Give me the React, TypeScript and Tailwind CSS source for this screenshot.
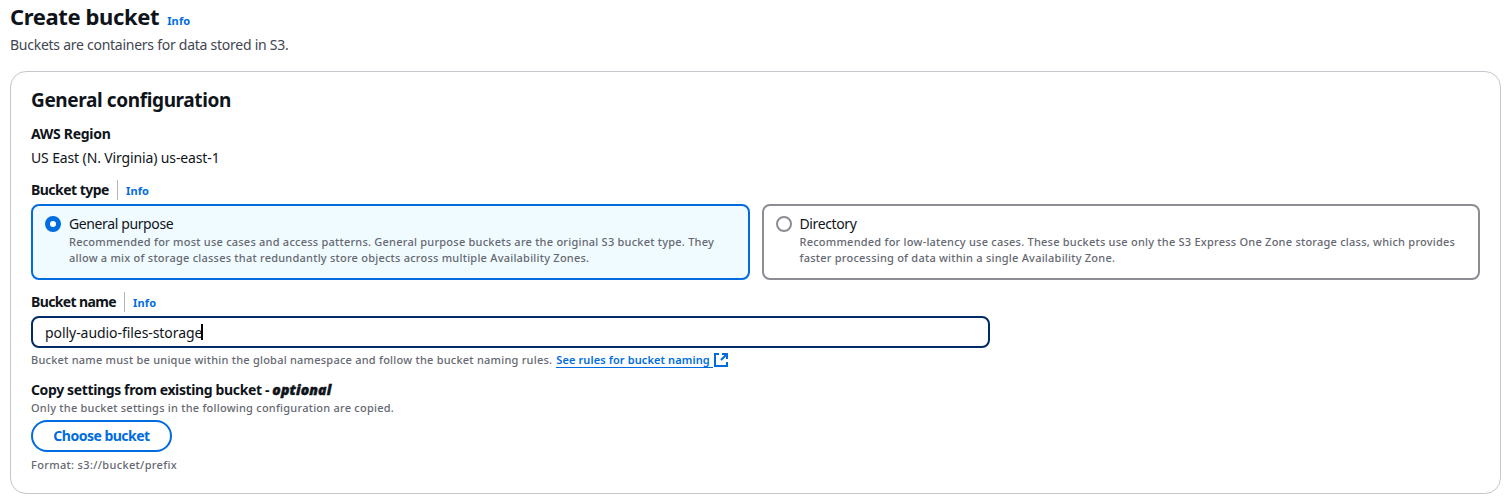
import type { ReactNode } from "react";

function Info({ className = "" }: { className?: string }) {
  return (
    <a href="#" className={`text-[11px] font-bold tracking-[0.15px] text-[#006ce0] ${className}`}>
      Info
    </a>
  );
}

function Label({ children, info = false }: { children: ReactNode; info?: boolean }) {
  return (
    <div className="flex h-5 items-center text-sm leading-5 font-bold">
      <span>{children}</span>
      {info && (
        <span className="ml-2 flex h-5 items-center border-l border-[#b4b4bb] pt-0.5 pl-2">
          <Info />
        </span>
      )}
    </div>
  );
}

function Hint({ children }: { children: ReactNode }) {
  return (
    <p className="text-[11px] leading-4 font-medium tracking-[0.23px] whitespace-nowrap text-[#656871]">
      {children}
    </p>
  );
}

function Tile({ title, selected = false, lines }: { title: string; selected?: boolean; lines: string[] }) {
  return (
    <div
      className={`flex h-[76px] flex-1 gap-2 rounded-lg border-2 px-3 pt-2 ${
        selected ? "border-[#006ce0] bg-[#f0fbff]" : "border-[#8c8c94] bg-white"
      }`}
    >
      <span
        className={`mt-0.5 size-4 shrink-0 rounded-full bg-white ${
          selected ? "border-5 border-[#006ce0]" : "border-2 border-[#8c8c94]"
        }`}
      />
      <div>
        <div className="text-sm leading-5 font-[450] tracking-[-0.38px]">{title}</div>
        {lines.map((line) => (
          <Hint key={line}>{line}</Hint>
        ))}
      </div>
    </div>
  );
}

function ExternalIcon() {
  return (
    <svg viewBox="0 0 14 14" className="ml-px size-3.5 shrink-0" fill="none" stroke="currentColor" strokeWidth="2">
      <path d="M5 1H1v12h12V9" />
      <path d="M8 1h5v5M13 1 7 7" />
    </svg>
  );
}

export default function App() {
  return (
    <main className="h-[502px] overflow-hidden bg-white pl-2.5 pr-2 font-['Noto_Sans','Open_Sans',sans-serif] text-[#0f141a]">
      <header className="h-[71px]">
        <div className="flex h-[34px] items-baseline">
          <h1 className="text-[22px] leading-8 font-bold tracking-[-0.38px]">Create bucket</h1>
          <Info className="ml-2" />
        </div>
        <p className="pt-px text-sm leading-5 font-[450] tracking-[-0.26px] text-[#424650]">
          Buckets are containers for data stored in S3.
        </p>
      </header>

      <section className="h-[423px] rounded-2xl border border-[#c6c6cd] px-5 pt-4">
        <h2 className="text-[19px] leading-6 font-bold tracking-[-0.38px]">General configuration</h2>

        <div className="mt-3">
          <Label>
            <span className="tracking-[-0.3px]">AWS Region</span>
          </Label>
          <p className="mt-1 text-sm leading-5 font-[450] tracking-[-0.13px]">US East (N. Virginia) us-east-1</p>
        </div>

        <div className="mt-3">
          <Label info>
            <span className="tracking-[-0.52px]">Bucket type</span>
          </Label>
          <div className="mt-1 flex gap-3">
            <Tile
              selected
              title="General purpose"
              lines={[
                "Recommended for most use cases and access patterns. General purpose buckets are the original S3 bucket type. They",
                "allow a mix of storage classes that redundantly store objects across multiple Availability Zones.",
              ]}
            />
            <Tile
              title="Directory"
              lines={[
                "Recommended for low-latency use cases. These buckets use only the S3 Express One Zone storage class, which provides",
                "faster processing of data within a single Availability Zone.",
              ]}
            />
          </div>
        </div>

        <div className="mt-3">
          <Label info>
            <span className="tracking-[-0.62px]">Bucket name</span>
          </Label>
          <div className="mt-1 flex h-8 w-[959px] items-center rounded-lg border-2 border-[#002b66] px-3">
            <span className="pt-0.5 text-sm leading-5 font-[450] tracking-[-0.06px]">polly-audio-files-storage</span>
            <span className="-ml-px h-4 w-0.5 bg-black" />
          </div>
          <div className="mt-1 flex">
            <Hint>Bucket name must be unique within the global namespace and follow the bucket naming rules.</Hint>
            <a href="#" className="ml-1 flex h-4 items-center text-[11px] leading-[15px] font-semibold text-[#006ce0]">
              <span className="h-4 w-[157px] border-b border-[#006ce0] tracking-[0.11px] whitespace-nowrap">
                See rules for bucket naming
              </span>
              <ExternalIcon />
            </a>
          </div>
        </div>

        <div className="mt-3">
          <Label>
            <span className="tracking-[-0.37px]">Copy settings from existing bucket - </span>
            <i className="font-black tracking-[0.1px] [-webkit-text-stroke:0.4px_#0f141a]">optional</i>
          </Label>
          <Hint>Only the bucket settings in the following configuration are copied.</Hint>
          <button className="mt-1 flex h-8 w-[141px] items-center justify-center rounded-full border-2 border-[#006ce0] text-sm leading-5 font-bold tracking-[-0.5px] text-[#006ce0]">
            Choose bucket
          </button>
          <p className="mt-[5px] text-[11px] leading-4 font-medium tracking-[0.33px] text-[#656871]">
            Format: s3://bucket/prefix
          </p>
        </div>
      </section>
    </main>
  );
}
